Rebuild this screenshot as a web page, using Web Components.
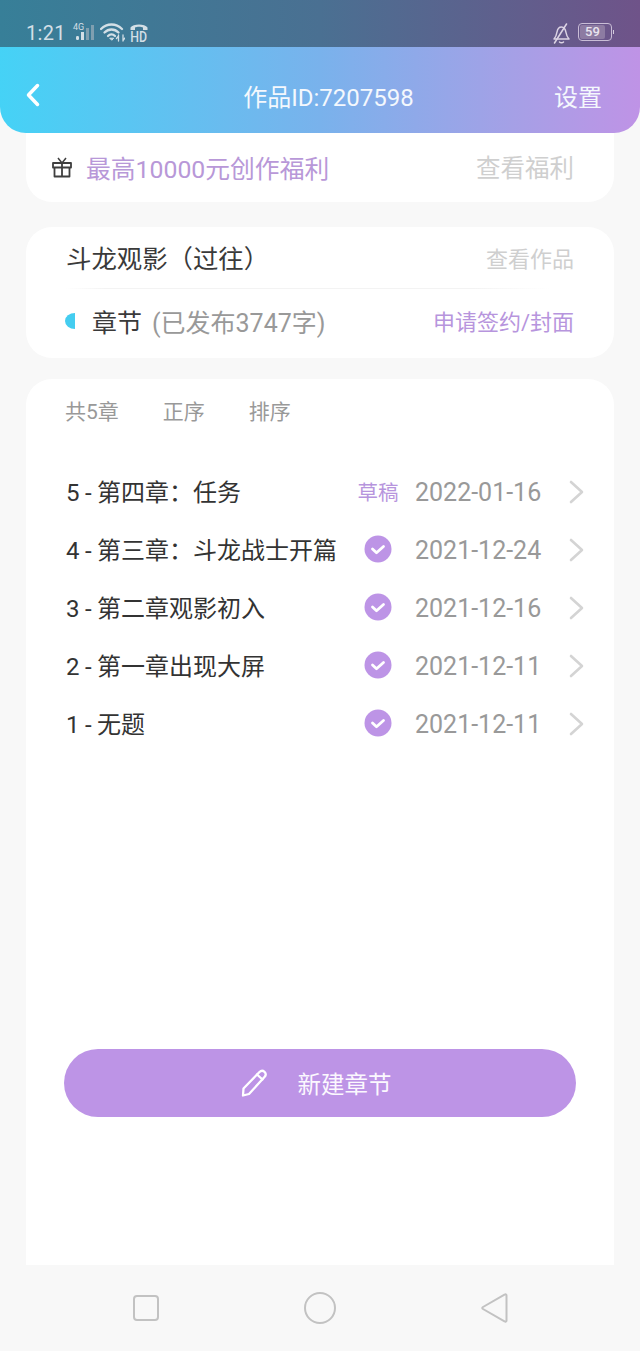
<!DOCTYPE html>
<html lang="zh">
<head>
<meta charset="utf-8">
<title>作品</title>
<style>
  html, body { margin: 0; height: 100%; }
  body {
    background: #f8f8f8;
    color: #333;
    font-family: Roboto, "Noto Sans CJK SC", sans-serif;
  }
  #page { display: flex; flex-direction: column; width: 640px; height: 1351px; overflow: hidden; }
  chapter-panel { flex: 1; }
</style>
</head>
<body>
<div id="page">
  <status-bar></status-bar>
  <top-header title-text="作品ID:7207598" action="设置"></top-header>
  <welfare-card></welfare-card>
  <work-card name="斗龙观影（过往）" words="(已发布3747字)"></work-card>
  <chapter-panel>
    <chapter-row date="2022-01-16" state="draft">5 - 第四章：任务</chapter-row>
    <chapter-row date="2021-12-24" state="ok">4 - 第三章：斗龙战士开篇</chapter-row>
    <chapter-row date="2021-12-16" state="ok">3 - 第二章观影初入</chapter-row>
    <chapter-row date="2021-12-11" state="ok">2 - 第一章出现大屏</chapter-row>
    <chapter-row date="2021-12-11" state="ok">1 - 无题</chapter-row>
    <new-button slot="action">新建章节</new-button>
  </chapter-panel>
  <nav-bar></nav-bar>
</div>

<script>
class StatusBar extends HTMLElement {
  constructor() {
    super();
    this.attachShadow({ mode: "open" });
    this.shadowRoot.innerHTML = `
    <style>
      :host {
        display: flex;
        align-items: flex-start;
        box-sizing: border-box;
        height: 47px;
        padding: 23px 28px 0 26px;
        background: linear-gradient(90deg, #377f98 0%, #4a7092 50%, #6f5389 100%);
        color: #d3dfe6;
      }
      .time { font-size: 20px; line-height: 20px; width: 47px; letter-spacing: 0.3px; }
      .net { position: relative; width: 21px; height: 18px; margin-right: 6px; }
      .net span { position: absolute; left: 0; top: 0; font-size: 9px; line-height: 9px; }
      .hd { display: flex; flex-direction: column; align-items: center; margin-left: 5px; width: 18px; }
      .hd span { font-size: 14px; line-height: 11px; font-weight: 500; margin-top: 1px; transform: scaleX(0.88); }
      .gap { flex: 1; }
      .battery {
        position: relative;
        box-sizing: border-box;
        width: 34px;
        height: 18px;
        margin-left: 8px;
        border: 1px solid #c9bdd6;
        border-radius: 4px;
        padding: 1px 6px 1px 1px;
      }
      .battery b {
        display: block;
        height: 14px;
        background: #8d7ba2;
        border-radius: 2px;
        font-size: 13px;
        line-height: 14px;
        font-weight: 500;
        text-align: center;
        color: #e8e3ee;
      }
      .battery i {
        position: absolute;
        right: -3px;
        top: 6px;
        width: 1.5px;
        height: 4px;
        background: #d4cbdc;
      }
    </style>
    <div class="time">1:21</div>
    <div class="net">
      <span>4G</span>
      <svg width="21" height="18" viewBox="0 0 21 18">
        <rect x="3" y="13" width="3" height="4" rx="1.2" fill="#d3dfe6"/>
        <rect x="8" y="9" width="3" height="8" fill="#d3dfe6"/>
        <rect x="13" y="5" width="3" height="12" fill="#7f9fb0"/>
        <rect x="18" y="2" width="3" height="15" fill="#7f9fb0"/>
      </svg>
    </div>
    <svg width="25" height="19" viewBox="0 0 25 19" fill="none" stroke="#d3dfe6" stroke-width="2.300" stroke-linecap="round">
      <path d="M1 6c6-6 15-6 21 0"/>
      <path d="M4.500 9.500c4-4 10-4 14 0"/>
      <path d="M8 13c2-2 5-2 7 0"/>
      <path d="M11.500 17l-1.800-1.800h3.600z" fill="#d3dfe6" stroke-width="1"/>
      <path d="M18.500 12v6M23 12v6M16.500 15.500l2-2.500M25 15l-2 2.500" stroke-width="1.300"/>
    </svg>
    <div class="hd">
      <svg width="18" height="8" viewBox="0 0 18 8"><path d="M0.500 7V4.500C3 0.500 15 0.500 17.500 4.500V7H13V4.500C11 3.500 7 3.500 5 4.500V7z" fill="#d3dfe6"/></svg>
      <span>HD</span>
    </div>
    <div class="gap"></div>
    <svg width="18" height="21" viewBox="0 0 18 21" fill="none" stroke="#dcd4e4" stroke-width="1.500" stroke-linecap="round" stroke-linejoin="round">
      <path d="M2 16c2-2 2.500-4 3-7s2-5 4.500-5 4 2.500 4.500 5.500 1 4.500 3 6.500z"/>
      <path d="M7.500 19c1 1 3 1 4 0"/>
      <path d="M14.500 1L2.500 20"/>
    </svg>
    <div class="battery"><b>59</b><i></i></div>`;
  }
}
customElements.define("status-bar", StatusBar);

class TopHeader extends HTMLElement {
  constructor() {
    super();
    this.attachShadow({ mode: "open" });
    this.shadowRoot.innerHTML = `
    <style>
      :host {
        display: flex;
        align-items: center;
        position: relative;
        z-index: 2;
        box-sizing: border-box;
        height: 86px;
        padding: 10px 38px 0 26px;
        background: linear-gradient(90deg, #45d2f6 0%, #79b2ec 50%, #a5a0e6 80%, #bf93e6 100%);
        border-radius: 0 0 26px 26px;
        color: #f4f8fd;
        font-size: 24px;
      }
      svg { display: block; }
      .title { flex: 1; text-align: center; margin-left: 63px; }
      .action { font-size: 24px; }
    </style>
    <svg width="14" height="24" viewBox="0 0 14 24" fill="none" stroke="#fff" stroke-width="3.500" stroke-linecap="round" stroke-linejoin="round"><path d="M11.500 2.500L2.500 12l9 9.500"/></svg>
    <div class="title"></div>
    <div class="action"></div>`;
    this.shadowRoot.querySelector(".title").textContent = this.getAttribute("title-text");
    this.shadowRoot.querySelector(".action").textContent = this.getAttribute("action");
  }
}
customElements.define("top-header", TopHeader);

class WelfareCard extends HTMLElement {
  constructor() {
    super();
    this.attachShadow({ mode: "open" });
    this.shadowRoot.innerHTML = `
    <style>
      :host {
        display: flex;
        align-items: center;
        box-sizing: border-box;
        height: 95px;
        margin: -26px 26px 0;
        padding: 26px 40px 0 26px;
        background: #fff;
        border-radius: 26px;
        font-size: 24.800px;
      }
      .text { margin-left: 14px; flex: 1; color: #b898d8; padding-bottom: 2px; }
      .more { color: #cfcfcf; font-size: 24.500px; padding-bottom: 2px; }
    </style>
    <svg width="20" height="21" viewBox="0 0 20 21" fill="none" stroke="#3f3f3f" stroke-width="1.800" stroke-linejoin="round">
      <rect x="1" y="6" width="18" height="4.500"/>
      <path d="M2.500 10.500V19.500H17.500V10.500M10 6V19.500"/>
      <path d="M10 6L6 1M10 6l4-5" stroke-width="1.500"/>
    </svg>
    <div class="text">最高10000元创作福利</div>
    <div class="more">查看福利</div>`;
  }
}
customElements.define("welfare-card", WelfareCard);

class WorkCard extends HTMLElement {
  constructor() {
    super();
    this.attachShadow({ mode: "open" });
    this.shadowRoot.innerHTML = `
    <style>
      :host {
        display: block;
        box-sizing: border-box;
        height: 131px;
        margin: 25px 26px 0;
        padding: 0 40px;
        background: #fff;
        border-radius: 26px;
      }
      .row { display: flex; align-items: center; justify-content: space-between; }
      .top { height: 62px; padding-bottom: 2px; box-sizing: border-box; border-bottom: 1px solid transparent;
        border-image: linear-gradient(90deg, #fff 0%, #f3f3f3 8%, #f3f3f3 80%, #fff 95%) 1; font-size: 25.400px; color: #3a3a3a; }
      .top .more { font-size: 22px; color: #cfcfcf; }
      .bottom { height: 69px; font-size: 25px; padding-bottom: 5px; box-sizing: border-box; }
      .left { display: flex; align-items: center; margin-left: -1px; }
      .half { width: 10px; height: 16px; background: #44cdf0; border-radius: 10px 0 0 10px / 8px 0 0 8px; margin-right: 17px; }
      .left span { margin-right: 10px; color: #3a3a3a; }
      .left em { font-style: normal; color: #999; }
      .sign { font-size: 22px; color: #b795dd; padding-bottom: 2px; }
    </style>
    <div class="row top"><div class="name"></div><div class="more">查看作品</div></div>
    <div class="row bottom">
      <div class="left"><div class="half"></div><span>章节</span><em></em></div>
      <div class="sign">申请签约/封面</div>
    </div>`;
    this.shadowRoot.querySelector(".name").textContent = this.getAttribute("name");
    this.shadowRoot.querySelector("em").textContent = this.getAttribute("words");
  }
}
customElements.define("work-card", WorkCard);

class ChapterPanel extends HTMLElement {
  constructor() {
    super();
    this.attachShadow({ mode: "open" });
    this.shadowRoot.innerHTML = `
    <style>
      :host {
        display: block;
        margin: 21px 26px 0;
        padding: 0 38px;
        background: #fff;
        border-radius: 26px 26px 0 0;
      }
      .tools {
        display: flex;
        align-items: center;
        gap: 44px;
        box-sizing: border-box;
        height: 64px;
        margin: 0 2px 0 1px;
        padding-bottom: 3px;
        font-size: 21px;
        color: #999;
      }
      .list { padding-top: 20px; margin-bottom: 296px; }
    </style>
    <div class="tools"><span>共5章</span><span>正序</span><span>排序</span></div>
    <div class="list"><slot></slot></div>
    <slot name="action"></slot>`;
  }
}
customElements.define("chapter-panel", ChapterPanel);

class ChapterRow extends HTMLElement {
  constructor() {
    super();
    this.attachShadow({ mode: "open" });
    const draft = this.getAttribute("state") == "draft";
    this.shadowRoot.innerHTML = `
    <style>
      :host {
        display: flex;
        align-items: center;
        height: 58px;
        margin: 0 -8px 0 2px;
        font-size: 24px;
        color: #333;
      }
      .title { flex: 1; white-space: nowrap; padding-bottom: 4px; word-spacing: -0.5px; }
      .state { display: flex; justify-content: center; width: 42px; margin-right: 16px; padding-bottom: 2px; }
      .draft { font-size: 20.500px; color: #b795dd; white-space: nowrap; }
      .date { width: 127px; font-size: 25px; color: #999; margin-right: 27px; white-space: nowrap; }
      svg { display: block; }
    </style>
    <div class="title"><slot></slot></div>
    <div class="state">${draft
      ? `<span class="draft">草稿</span>`
      : `<svg width="28" height="28" viewBox="0 0 28 28"><circle cx="14" cy="14" r="13.500" fill="#bd94e6"/><path d="M8.500 14l4 3.800 7-6.300" fill="none" stroke="#fff" stroke-width="2.800" stroke-linecap="round" stroke-linejoin="round"/></svg>`}</div>
    <div class="date">${this.getAttribute("date")}</div>
    <svg width="15" height="24" viewBox="0 0 15 24" fill="none" stroke="#d4d4d4" stroke-width="2.600" stroke-linecap="round" stroke-linejoin="round"><path d="M2 2l11 10L2 22"/></svg>`;
  }
}
customElements.define("chapter-row", ChapterRow);

class NewButton extends HTMLElement {
  constructor() {
    super();
    this.attachShadow({ mode: "open" });
    this.shadowRoot.innerHTML = `
    <style>
      :host {
        display: flex;
        align-items: center;
        justify-content: center;
        gap: 29px;
        box-sizing: border-box;
        height: 68px;
        padding-right: 8px;
        border-radius: 34px;
        background: #bd94e6;
        color: #fbf8fe;
        font-size: 23.500px;
      }
    </style>
    <svg width="28" height="28" viewBox="0 0 28 28" fill="none" stroke="#fff" stroke-width="2.300" stroke-linejoin="round" stroke-linecap="round">
      <path d="M2.500 19.500L18.500 3c1.500-1.500 3.500-1.500 5-0.200s1.700 3.400 0.200 5L8 25l-6 1.500z"/>
      <path d="M16 5.500l5.500 5"/>
    </svg>
    <span><slot></slot></span>`;
  }
}
customElements.define("new-button", NewButton);

class NavBar extends HTMLElement {
  constructor() {
    super();
    this.attachShadow({ mode: "open" });
    this.shadowRoot.innerHTML = `
    <style>
      :host {
        display: flex;
        align-items: center;
        justify-content: space-between;
        box-sizing: border-box;
        height: 86px;
        padding: 0 132px 0 133px;
        background: #f8f8f8;
      }
      svg { display: block; }
    </style>
    <svg width="26" height="26" viewBox="0 0 26 26" fill="none" stroke="#c2c2c2" stroke-width="2"><rect x="1" y="1" width="24" height="24" rx="3"/></svg>
    <svg width="32" height="32" viewBox="0 0 32 32" fill="none" stroke="#c2c2c2" stroke-width="2"><circle cx="16" cy="16" r="15"/></svg>
    <svg width="27" height="30" viewBox="0 0 27 30" fill="none" stroke="#c2c2c2" stroke-width="2" stroke-linejoin="round"><path d="M25.500 2.500c0-1-1-1.500-2-0.800L2 14c-1 .600-1 1.400 0 2l21.500 12.300c1 .700 2 .200 2-0.800z"/></svg>`;
  }
}
customElements.define("nav-bar", NavBar);
</script>
</body>
</html>
